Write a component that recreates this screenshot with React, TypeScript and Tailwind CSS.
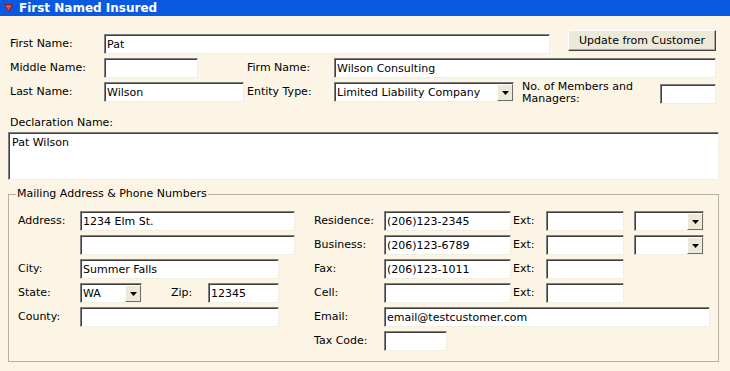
import React from "react";

const fieldCls =
  "h-[20px] bg-white border border-t-[#7f7f7f] border-l-[#7f7f7f] border-r-[#f1efe2] border-b-[#f1efe2] shadow-[inset_1px_1px_0_#404040] pl-[2px] text-[11px] text-black outline-none font-['DejaVu_Sans',sans-serif]";

function Field({ className = "", value = "" }: { className?: string; value?: string }) {
  return <input readOnly value={value} className={`${fieldCls} ${className}`} />;
}

function Arrow() {
  return (
    <div className="w-[16px] h-[17px] bg-[#ece9d8] border border-t-white border-l-white border-r-[#716f64] border-b-[#716f64] flex items-center justify-center">
      <svg width="7" height="4" viewBox="0 0 7 4">
        <path d="M0 0 L7 0 L3.5 4 Z" fill="#000" />
      </svg>
    </div>
  );
}

function Select({ className = "", value = "" }: { className?: string; value?: string }) {
  return (
    <div
      className={`h-[20px] bg-white border border-t-[#7f7f7f] border-l-[#7f7f7f] border-r-[#f1efe2] border-b-[#f1efe2] shadow-[inset_1px_1px_0_#404040] pt-[1px] pl-[1px] flex items-start ${className}`}
    >
      <span className="flex-1 pl-[1px] leading-[17px] whitespace-nowrap overflow-hidden">{value}</span>
      <Arrow />
    </div>
  );
}

function Label({ className = "", children }: { className?: string; children?: React.ReactNode }) {
  return <div className={`h-[20px] flex items-center whitespace-nowrap ${className}`}>{children}</div>;
}

export default function App() {
  return (
    <div className="w-[730px] h-[371px] bg-[#fcf4e4] font-['DejaVu_Sans',sans-serif] text-[11px] text-black overflow-hidden">
      <div className="h-[16px] bg-[#0a5ae0] flex items-center pl-[4px] gap-[6px]">
        <svg width="9" height="8" viewBox="0 0 9 8">
          <path d="M0.5 0.5 L8.5 0.5 L4.5 7.5 Z" fill="#e05050" stroke="#7a2020" strokeWidth="1" />
        </svg>
        <span className="text-white font-bold text-[12px] leading-none">First Named Insured</span>
      </div>

      <div className="pl-[10px] pt-[14px] flex flex-col gap-[4px]">
        <div className="flex items-start">
          <Label className="w-[94px] mt-[4px]">First Name:</Label>
          <Field className="w-[446px] mt-[4px]" value="Pat" />
          <button className="ml-[18px] w-[148px] h-[21px] bg-[#ece9d8] border border-t-white border-l-white border-r-[#404040] border-b-[#404040] shadow-[inset_-1px_-1px_0_#aca899] text-[11px] leading-none">
            Update from Customer
          </button>
        </div>
        <div className="flex items-start">
          <Label className="w-[94px]">Middle Name:</Label>
          <Field className="w-[94px]" />
          <Label className="ml-[49px] w-[87px]">Firm Name:</Label>
          <Field className="w-[382px]" value="Wilson Consulting" />
        </div>
        <div className="flex items-start">
          <Label className="w-[94px]">Last Name:</Label>
          <Field className="w-[140px]" value="Wilson" />
          <Label className="ml-[3px] w-[87px]">Entity Type:</Label>
          <Select className="w-[180px]" value="Limited Liability Company" />
          <div className="ml-[8px] w-[138px] -mt-[1px] leading-[12px]">No. of Members and Managers:</div>
          <Field className="w-[56px] mt-[2px]" />
        </div>
      </div>

      <div className="px-[8px]">
        <div className="ml-[2px] mt-[11px] leading-[14px]">Declaration Name:</div>
        <textarea
          readOnly
          value="Pat Wilson"
          className="mt-[2px] block w-[711px] h-[48px] resize-none bg-white border border-t-[#7f7f7f] border-l-[#7f7f7f] border-r-[#f1efe2] border-b-[#f1efe2] shadow-[inset_1px_1px_0_#404040] px-[3px] py-[3px] text-[11px] leading-[13px] outline-none font-['DejaVu_Sans',sans-serif]"
        />

        <fieldset className="mt-[7px] w-[711px] border border-[#b4b0a2] pl-[9px] pt-[10px] pb-[10px]">
          <legend className="-ml-[2px] px-[1px] leading-[14px]">Mailing Address &amp; Phone Numbers</legend>
          <div className="flex flex-col gap-[4px]">
            <div className="flex items-center">
              <div className="w-[296px] flex">
                <Label className="w-[62px]">Address:</Label>
                <Field className="w-[215px]" value="1234 Elm St." />
              </div>
              <Label className="w-[70px]">Residence:</Label>
              <Field className="w-[127px]" value="(206)123-2345" />
              <Label className="ml-[2px] w-[33px]">Ext:</Label>
              <Field className="w-[78px]" />
              <Select className="ml-[10px] w-[70px]" />
            </div>
            <div className="flex items-center">
              <div className="w-[296px] flex">
                <div className="w-[62px]" />
                <Field className="w-[215px]" />
              </div>
              <Label className="w-[70px]">Business:</Label>
              <Field className="w-[127px]" value="(206)123-6789" />
              <Label className="ml-[2px] w-[33px]">Ext:</Label>
              <Field className="w-[78px]" />
              <Select className="ml-[10px] w-[70px]" />
            </div>
            <div className="flex items-center">
              <div className="w-[296px] flex">
                <Label className="w-[62px]">City:</Label>
                <Field className="w-[199px]" value="Summer Falls" />
              </div>
              <Label className="w-[70px]">Fax:</Label>
              <Field className="w-[127px]" value="(206)123-1011" />
              <Label className="ml-[2px] w-[33px]">Ext:</Label>
              <Field className="w-[78px]" />
            </div>
            <div className="flex items-center">
              <div className="w-[296px] flex">
                <Label className="w-[62px]">State:</Label>
                <Select className="w-[62px]" value="WA" />
                <Label className="ml-[29px] w-[37px]">Zip:</Label>
                <Field className="w-[71px]" value="12345" />
              </div>
              <Label className="w-[70px]">Cell:</Label>
              <Field className="w-[127px]" />
              <Label className="ml-[2px] w-[33px]">Ext:</Label>
              <Field className="w-[78px]" />
            </div>
            <div className="flex items-center">
              <div className="w-[296px] flex">
                <Label className="w-[62px]">County:</Label>
                <Field className="w-[199px]" />
              </div>
              <Label className="w-[70px]">Email:</Label>
              <Field className="w-[326px]" value="email@testcustomer.com" />
            </div>
            <div className="flex items-center">
              <div className="w-[296px]" />
              <Label className="w-[70px]">Tax Code:</Label>
              <Field className="w-[63px]" />
            </div>
          </div>
        </fieldset>
      </div>
    </div>
  );
}
